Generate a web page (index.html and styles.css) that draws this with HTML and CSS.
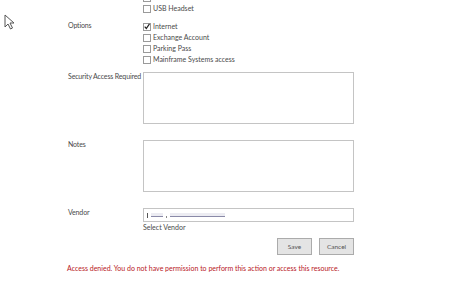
FILE: index.html
```html
<!DOCTYPE html>
<html lang="en">

<head>
    <meta charset="UTF-8" />
    <meta name="viewport" content="width=device-width, initial-scale=1.0" />
    <title>Edit Request</title>
    <link rel="stylesheet" href="styles.css">
</head>

<body>
    <svg class="cursor" width="12" height="16" viewBox="0 0 12 16">
        <path d="M1 1 L1 13 L4 10 L6.5 15 L8.5 14 L6 9 L10 9 Z" fill="#fff" stroke="#555" stroke-width="1" />
    </svg>

    <form class="form">
        <div class="label"></div>
        <div class="choices first">
            <div class="choice"><span class="box"></span></div>
            <div class="choice"><span class="box"></span>USB Headset</div>
        </div>

        <div class="label options">Options</div>
        <div class="choices options">
            <div class="choice">
                <span class="box">
                    <svg width="7" height="7" viewBox="0 0 7 7">
                        <path d="M0.8 3.6 L2.7 5.8 L6.4 0.4" fill="none" stroke="#222" stroke-width="1.4" />
                    </svg>
                </span>Internet
            </div>
            <div class="choice"><span class="box"></span>Exchange Account</div>
            <div class="choice"><span class="box"></span>Parking Pass</div>
            <div class="choice"><span class="box"></span>Mainframe Systems access</div>
        </div>

        <div class="label field">Security Access Required</div>
        <div class="field"><textarea class="area"></textarea></div>

        <div class="label field">Notes</div>
        <div class="field"><textarea class="area"></textarea></div>

        <div class="label field">Vendor</div>
        <div class="field">
            <div class="picker">
                <span class="caret"></span>
                <span class="name short"></span>
                <span class="comma"></span>
                <span class="name long"></span>
            </div>
            <div class="hint">Select Vendor</div>
        </div>

        <div class="buttons">
            <button type="button" class="btn">Save</button>
            <button type="button" class="btn">Cancel</button>
        </div>
    </form>

    <p class="error">Access denied. You do not have permission to perform this action or access this resource.</p>
</body>

</html>
```

FILE: styles.css
```css
body {
    margin: 0;
    font-family: Lato, "Open Sans", sans-serif;
    font-size: 7px;
    color: #4a4a4a;
    background: #fff;
    overflow: hidden;
}

.cursor {
    position: absolute;
    left: 4px;
    top: 14px;
}

.form {
    display: grid;
    grid-template-columns: 75px 212px;
    padding-left: 68px;
    margin-top: -8px;
}

.label {
    white-space: nowrap;
    letter-spacing: -0.15px;
}

.choices {
    display: flex;
    flex-direction: column;
}

.choice {
    display: flex;
    align-items: center;
    height: 11px;
    line-height: 11px;
}

.box {
    width: 6px;
    height: 6px;
    border: 1px solid #9a9a9a;
    background: #fff;
    margin-right: 2px;
    display: flex;
    align-items: center;
    justify-content: center;
}

.box svg {
    display: block;
}

.options {
    margin-top: 7px;
}

.label.options {
    line-height: 9px;
}

.field {
    margin-top: 7px;
}

.label.field {
    line-height: 9px;
}

.area {
    display: block;
    box-sizing: border-box;
    width: 211px;
    height: 52px;
    margin: 0 0 9px 0;
    border: 1px solid #c4c4c4;
    resize: none;
    padding: 0;
}

.picker {
    box-sizing: border-box;
    width: 211px;
    height: 14px;
    border: 1px solid #c4c4c4;
    display: flex;
    align-items: center;
    padding-left: 3px;
    gap: 3px;
}

.caret {
    width: 1px;
    height: 5px;
    background: #555;
}

.name {
    height: 3px;
    border-bottom: 1px solid #8a8aa8;
    background: #ececf2;
}

.short {
    width: 12px;
}

.comma {
    width: 1px;
    height: 2px;
    margin-top: 3px;
    background: #888;
}

.long {
    width: 55px;
}

.hint {
    margin-top: 1px;
    line-height: 9px;
}

.buttons {
    grid-column: 2;
    display: flex;
    justify-content: flex-end;
    gap: 7px;
    width: 211px;
    margin-top: 6px;
}

.btn {
    box-sizing: border-box;
    width: 35px;
    height: 17px;
    border: 1px solid #ababab;
    background: #e4e4e4;
    font-family: inherit;
    font-size: 6.5px;
    color: #555;
    padding: 0;
}

.error {
    margin: 9px 0 0 67px;
    color: #b8171e;
    font-size: 7px;
}
```
